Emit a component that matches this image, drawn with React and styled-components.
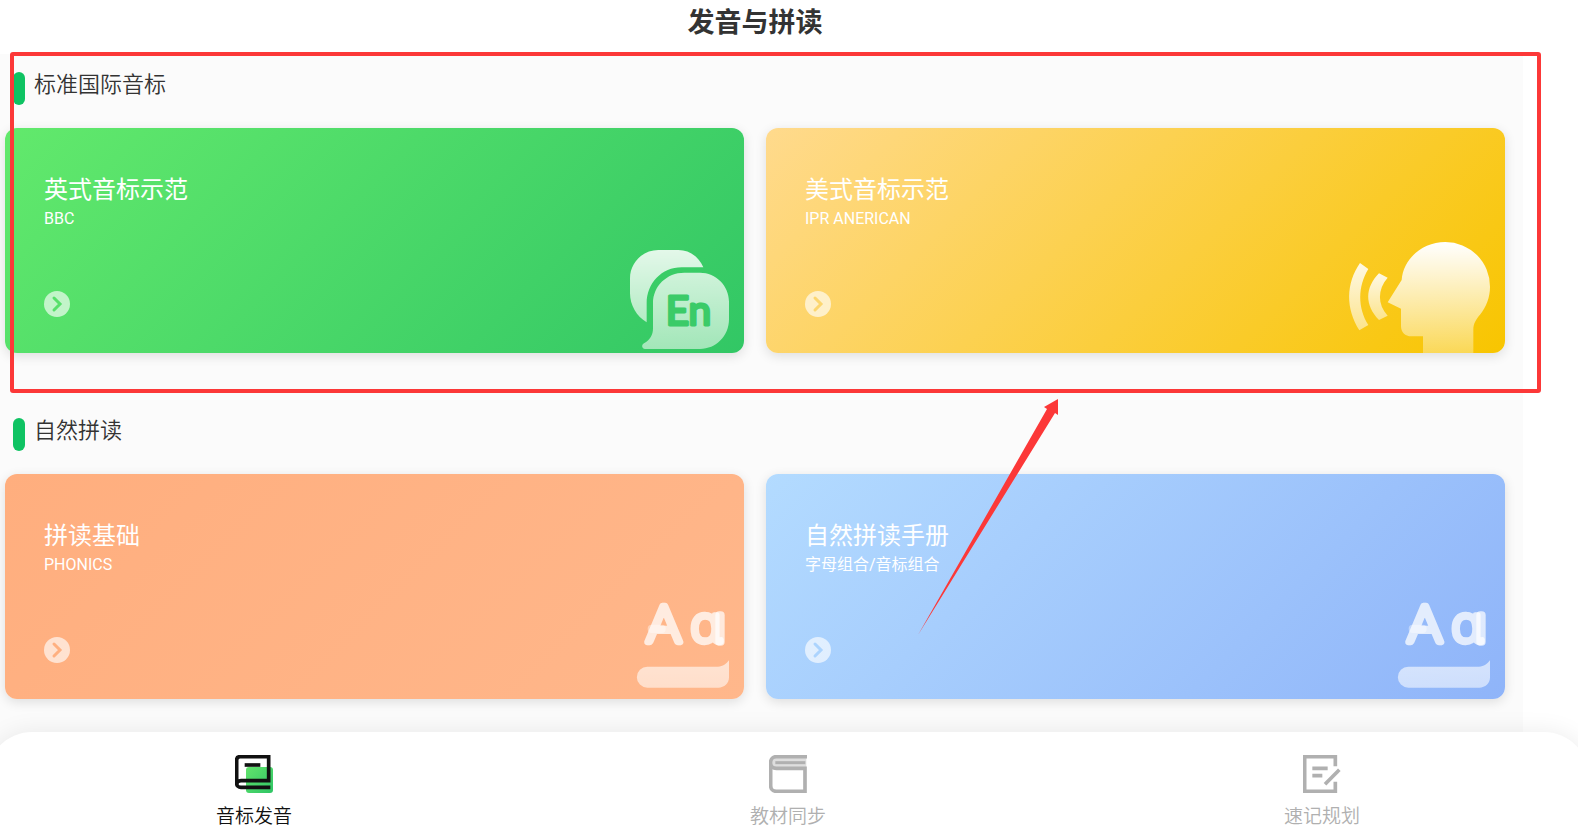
import React from 'react';
import styled, { createGlobalStyle } from 'styled-components'

const GlobalStyle = createGlobalStyle`
    * {
        box-sizing: border-box;
    }

    body {
        margin: 0;
        background: #ffffff;
        font-family: Roboto, 'Noto Sans CJK SC', sans-serif;
    }
`

const Page = styled.div`
    position: relative;
    display: flex;
    flex-direction: column;
    min-height: 100vh;
    overflow: hidden;
`

const Header = styled.header`
    height: 54px;
    margin-right: 68px;
    text-align: center;
`

const Title = styled.h1`
    margin: 0;
    color: #333333;
    font-size: 27px;
    font-weight: 700;
    line-height: 46px;
`

const Main = styled.main`
    flex: 1;
    margin-right: 55px;
    padding: 18px 18px 80px 5px;
    background: #fbfbfb;
`

const Section = styled.section`
    margin-bottom: 65px;

    &:last-child {
        margin-bottom: 0;
    }
`

const Heading = styled.div`
    display: flex;
    gap: 9px;
    height: 33px;
    margin: 0 8px 23px;
`

const Pill = styled.span`
    width: 12px;
    height: 33px;
    border-radius: 6px;
    background: #0fc363;
`

const HeadingText = styled.h2`
    margin: 0;
    color: #333333;
    font-size: 22px;
    font-weight: 350;
    line-height: 26px;
`

const Cards = styled.div`
    display: grid;
    grid-template-columns: 1fr 1fr;
    gap: 22px;
`

const Card = styled.a`
    display: flex;
    justify-content: space-between;
    height: 225px;
    padding: 0 15px 0 39px;
    border-radius: 12px;
    color: #ffffff;
    text-decoration: none;
    background: linear-gradient(135deg, ${props => props.$from}, ${props => props.$to});
    box-shadow: 0 3px 12px rgba(0, 0, 0, 0.12);
`

const CardBody = styled.div`
    display: flex;
    flex-direction: column;
    padding: 46px 0 36px;
`

const CardTitle = styled.h3`
    margin: 0;
    font-size: 24px;
    font-weight: 400;
    line-height: 32px;
`

const CardText = styled.p`
    margin: 0;
    font-size: 16px;
    line-height: 26px;
`

const Go = styled.svg`
    width: 26px;
    height: 26px;
    margin-top: auto;
`

const Art = styled.svg`
    flex: none;
    align-self: flex-end;
    width: ${props => props.$width}px;
    height: ${props => props.$height}px;
    margin-bottom: ${props => props.$bottom}px;
    overflow: visible;
`

const TabBar = styled.nav`
    position: relative;
    display: grid;
    grid-template-columns: repeat(3, 1fr);
    height: 107px;
    margin: -60px -11px 0 -13px;
    border-radius: 45px 45px 0 0;
    background: #ffffff;
    box-shadow: 0 0 24px rgba(0, 0, 0, 0.08);
`

const Tab = styled.button`
    display: flex;
    flex-direction: column;
    align-items: center;
    gap: 10px;
    padding: 23px 0 0;
    border: none;
    background: none;
    color: ${props => props.$active ? '#111111' : '#b0b0b0'};
    font-family: inherit;
    font-size: 19px;
    font-weight: 350;
    line-height: 28px;
    cursor: pointer;
`

const TabIcon = styled.svg`
    width: 38px;
    height: 38px;
`

const Frame = styled.div`
    position: absolute;
    top: 52px;
    left: 10px;
    right: 37px;
    height: 341px;
    border: 4px solid #fc3838;
    border-radius: 3px;
    pointer-events: none;
`

const Pointer = styled.svg`
    position: absolute;
    top: 399px;
    left: 918px;
    width: 140px;
    height: 236px;
    pointer-events: none;
`

const Fade = ({ id, top, bottom }) => (
    <defs>
        <linearGradient id={id} x1="0" y1="0" x2="0" y2="1">
            <stop offset="0" stopColor="#fff" stopOpacity={top}/>
            <stop offset="1" stopColor="#fff" stopOpacity={bottom}/>
        </linearGradient>
    </defs>
)

const BubbleArt = () => (
    <Art $width={99} $height={99} $bottom={4} viewBox="0 0 297 297">
        <Fade id="bubbleBack" top={0.86} bottom={0.62}/>
        <Fade id="bubbleFront" top={0.76} bottom={0.54}/>
        <path fill="url(#bubbleBack)" d="M85 0H145C180 0 207 22 220 52H155C95 52 50 100 50 160V217C20 200 0 165 0 130V85C0 38 38 0 85 0Z"/>
        <path fill="url(#bubbleFront)" d="M163 68H210C258 68 297 107 297 155V208C297 258 258 297 210 297H45C36 297 33 285 42 280C60 270 69 255 69 235V160C69 108 110 68 163 68Z"/>
        <text x="107" y="225" fontFamily="Lato" fontSize="122" fontWeight="400" fill="#3bcb68" stroke="#3bcb68" strokeWidth="9" strokeLinejoin="round">En</text>
    </Art>
)

const HeadArt = () => (
    <Art $width={141} $height={111} $bottom={0} viewBox="0 0 423 333">
        <Fade id="head" top={1} bottom={0.32}/>
        <Fade id="wave" top={0.88} bottom={0.5}/>
        <path fill="url(#head)" d="M158 114L116 181L156 200V252C156 270 168 283 187 283H222V333H373V262C373 245 382 230 393 218C412 194 423 166 423 134A134 134 0 0 0 289 0C220 0 163 50 158 114Z"/>
        <path fill="url(#wave)" d="M33 63L58 81C26 133 26 198 58 249L31 265C-10 200 -10 125 33 63Z"/>
        <path fill="url(#wave)" d="M90 94L116 107C85 142 85 187 116 221L90 234C47 190 47 138 90 94Z"/>
    </Art>
)

const LettersArt = ({ id }) => (
    <Art $width={92} $height={88} $bottom={11} viewBox="0 0 276 264">
        <Fade id={id} top={0.62} bottom={0.55}/>
        <g fill="#fff" stroke="#fff" strokeLinejoin="round" opacity="0.74" fontSize="156">
            <text x="29" y="126" fontFamily="Lato" fontWeight="300" strokeWidth="19">A</text>
            <text x="160" y="126" fontFamily="'Noto Sans'" fontWeight="300" strokeWidth="16">ɑ</text>
        </g>
        <rect x="32" y="74" width="54" height="25" rx="12" fill="#fff" opacity="0.4"/>
        <rect x="235" y="34" width="28" height="103" rx="12" fill="#fff" opacity="0.7"/>
        <path fill={`url(#${id})`} d="M31 200H243C258 200 268 192 276 181V232C276 250 262 263 244 263H31A31 31 0 0 1 31 200Z"/>
    </Art>
)

const sections = [
    {
        title: '标准国际音标',
        cards: [
            { title: '英式音标示范', text: 'BBC', from: '#62e96c', to: '#32c765', arrow: '#58e06b', art: <BubbleArt/> },
            { title: '美式音标示范', text: 'IPR ANERICAN', from: '#ffda8d', to: '#f8c500', arrow: '#fcd66f', art: <HeadArt/> }
        ]
    },
    {
        title: '自然拼读',
        cards: [
            { title: '拼读基础', text: 'PHONICS', from: '#ffae7e', to: '#ffb78b', arrow: '#ffb081', art: <LettersArt id="barOrange"/> },
            { title: '自然拼读手册', text: '字母组合/音标组合', from: '#b3dbff', to: '#8fb4f9', arrow: '#acd4fe', art: <LettersArt id="barBlue"/> }
        ]
    }
]

const BookIcon = () => (
    <TabIcon viewBox="0 0 114 114" fill="none" stroke="#111" strokeWidth="11">
        <defs>
            <linearGradient id="page" x1="0" y1="0" x2="1" y2="1">
                <stop offset="0" stopColor="#62e36c"/>
                <stop offset="1" stopColor="#2fc565"/>
            </linearGradient>
        </defs>
        <rect x="33" y="36" width="81" height="78" rx="9" fill="url(#page)" stroke="none"/>
        <path d="M106 97H18C10 97 5 92 5 86V15C5 9 9 5 15 5H101V77H18C10 77 5 82 5 88"/>
        <path d="M29 30H76"/>
    </TabIcon>
)

const TextbookIcon = () => (
    <TabIcon viewBox="0 0 114 114" fill="none" stroke="#b0b0b0" strokeWidth="11">
        <path d="M22 8H112V38H22C6 36 6 10 22 8Z" fill="#dedede" stroke="none"/>
        <path d="M114 5H22C12 5 5 12 5 22V92C5 102 12 109 22 109H108V40H22C12 40 5 34 5 24"/>
        <path d="M19 23H109" strokeWidth="9"/>
    </TabIcon>
)

const PlanIcon = () => (
    <TabIcon viewBox="0 0 114 114" fill="none" stroke="#b0b0b0" strokeWidth="11">
        <path d="M97 34V5H5V109H97V80"/>
        <path d="M28 40H74M28 62H58"/>
        <path d="M66 88L109 44"/>
    </TabIcon>
)

const tabs = [
    { label: '音标发音', icon: <BookIcon/>, active: true },
    { label: '教材同步', icon: <TextbookIcon/> },
    { label: '速记规划', icon: <PlanIcon/> }
]

const App = () => {
    return(
        <Page>
            <GlobalStyle/>
            <Header>
                <Title>发音与拼读</Title>
            </Header>
            <Main>
                {sections.map(s =>
                    <Section key={s.title}>
                        <Heading>
                            <Pill/>
                            <HeadingText>{s.title}</HeadingText>
                        </Heading>
                        <Cards>
                            {s.cards.map(c =>
                                <Card key={c.title} href="#" $from={c.from} $to={c.to}>
                                    <CardBody>
                                        <CardTitle>{c.title}</CardTitle>
                                        <CardText>{c.text}</CardText>
                                        <Go viewBox="0 0 26 26" fill="none">
                                            <circle cx="13" cy="13" r="13" fill="#fff" opacity="0.64"/>
                                            <path d="M10 7L16 13L10 19" stroke={c.arrow} strokeWidth="3" strokeLinecap="round"/>
                                        </Go>
                                    </CardBody>
                                    {c.art}
                                </Card>
                            )}
                        </Cards>
                    </Section>
                )}
            </Main>
            <TabBar>
                {tabs.map(t =>
                    <Tab key={t.label} type="button" $active={t.active}>
                        {t.icon}
                        {t.label}
                    </Tab>
                )}
            </TabBar>
            <Frame/>
            <Pointer viewBox="0 0 140 236">
                <path fill="#fc3838" d="M140 0V16L137 14L0 236L129 10L126 8Z"/>
            </Pointer>
        </Page>)
}

export default App
